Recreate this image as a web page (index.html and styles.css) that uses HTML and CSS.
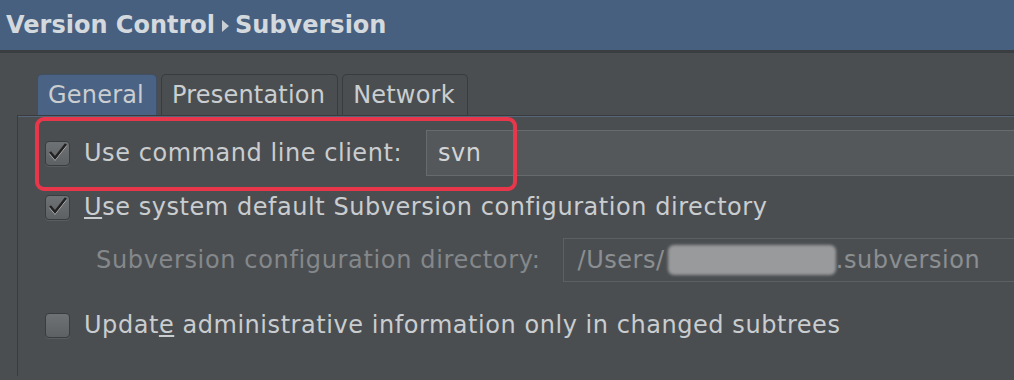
FILE: index.html
```html
<!DOCTYPE html>
<html lang="en" dir="ltr">
  <head>
    <meta charset="utf-8">
    <meta name="viewport" content="width=device-width, initial-scale=1">
    <title>Subversion</title>
    <link rel="stylesheet" href="styles.css">
  </head>
  <body>
    <header class="titlebar">
      <span>Version Control</span>
      <svg class="crumb" width="10" height="14" viewBox="0 0 10 14"><path d="M1 1 L8 7 L1 13 Z" fill="#c9ced4"/></svg>
      <span>Subversion</span>
    </header>

    <div class="content">
      <div class="tabs">
        <div class="tab selected">General</div>
        <div class="tab">Presentation</div>
        <div class="tab">Network</div>
      </div>

      <div class="panel">
        <div class="row row-client">
          <span class="check on">
            <svg width="25" height="25" viewBox="0 0 25 25"><path d="M5 12 L10 18 L21 4" fill="none" stroke="#d4d6d8" stroke-width="2.2" transform="translate(0 1)"/><path d="M5 12 L10 18 L21 4" fill="none" stroke="#222" stroke-width="2.6"/></svg>
          </span>
          <span class="label">Use command line client:</span>
          <div class="field">svn</div>
          <div class="highlight"></div>
        </div>

        <div class="row row-default">
          <span class="check on">
            <svg width="25" height="25" viewBox="0 0 25 25"><path d="M5 12 L10 18 L21 4" fill="none" stroke="#d4d6d8" stroke-width="2.2" transform="translate(0 1)"/><path d="M5 12 L10 18 L21 4" fill="none" stroke="#222" stroke-width="2.6"/></svg>
          </span>
          <span class="label"><u>U</u>se system default Subversion configuration directory</span>
        </div>

        <div class="row row-dir">
          <span class="label muted">Subversion configuration directory:</span>
          <div class="field dim">/Users/<span class="redact"></span>.subversion</div>
        </div>

        <div class="row row-update">
          <span class="check"></span>
          <span class="label">Updat<u>e</u> administrative information only in changed subtrees</span>
        </div>
      </div>
    </div>
  </body>
</html>
```

FILE: styles.css
```css
body {
  margin: 0;
  background: #4b4e51;
  font-family: "DejaVu Sans", sans-serif;
  color: #cacdcf;
  overflow: hidden;
}

.titlebar {
  height: 50px;
  padding-left: 6px;
  display: flex;
  align-items: center;
  gap: 6px;
  background: #47607f;
  border-bottom: 3px solid #3b3e41;
  color: #d4d9de;
  font-size: 24px;
  font-weight: bold;
}

.crumb {
  margin: 2px -2px 0 0;
}

.content {
  padding-top: 21px;
}

.tabs {
  display: flex;
  gap: 4px;
  margin-left: 37px;
}

.tab {
  height: 40px;
  padding: 0 12px 0 10px;
  display: flex;
  align-items: center;
  border: 1px solid #393b3d;
  border-bottom: none;
  border-radius: 5px 5px 0 0;
  font-size: 24px;
  letter-spacing: 0.2px;
  color: #cbced0;
}

.tab.selected {
  background: #4a6283;
  border-color: #3e4f66;
}

.panel {
  margin-left: 17px;
  margin-right: -20px;
  height: 260px;
  border-left: 1px solid #393b3d;
  border-top: 1px solid #393b3d;
  box-shadow: inset 0 1px 0 #56657a;
  padding-left: 27px;
}

.row {
  display: flex;
  align-items: center;
  font-size: 24px;
  letter-spacing: 0.55px;
}

.row-client {
  position: relative;
  height: 46px;
  margin-top: 14px;
}

.row-default {
  height: 30px;
  margin-top: 16px;
}

.row-dir {
  height: 44px;
  margin-top: 16px;
  padding-left: 51px;
}

.row-update {
  height: 30px;
  margin-top: 28px;
}

.check {
  width: 23px;
  height: 23px;
  flex: none;
  position: relative;
  border: 1px solid #3a3c3e;
  border-radius: 4px;
  background: linear-gradient(#6f7275, #5e6164);
  box-shadow: 0 1px 0 #5a5d60;
  margin-right: 14px;
}

.check svg {
  position: absolute;
  left: -1px;
  top: -2px;
}

.label {
  white-space: nowrap;
}

.label.muted {
  color: #85888b;
  letter-spacing: 0.65px;
}

.field {
  flex: 1;
  align-self: stretch;
  display: flex;
  align-items: center;
  margin-left: 24px;
  padding-left: 11px;
  background: #54585a;
  border: 1px solid #686b6d;
  color: #d2d4d6;
  white-space: nowrap;
}

.row-dir .field {
  margin-left: 22px;
  padding-left: 14px;
  background: #4b4e51;
  border-color: #5d6062;
}

.field.dim {
  color: #8c8f91;
}

.redact {
  display: inline-block;
  width: 168px;
  height: 30px;
  margin: 0 0 0 3px;
  background: #999a9b;
  border-radius: 6px;
  filter: blur(1.5px);
}

.highlight {
  position: absolute;
  left: -10px;
  top: -13px;
  width: 474px;
  height: 66px;
  border: 4px solid #e8364b;
  border-radius: 9px;
}
```
